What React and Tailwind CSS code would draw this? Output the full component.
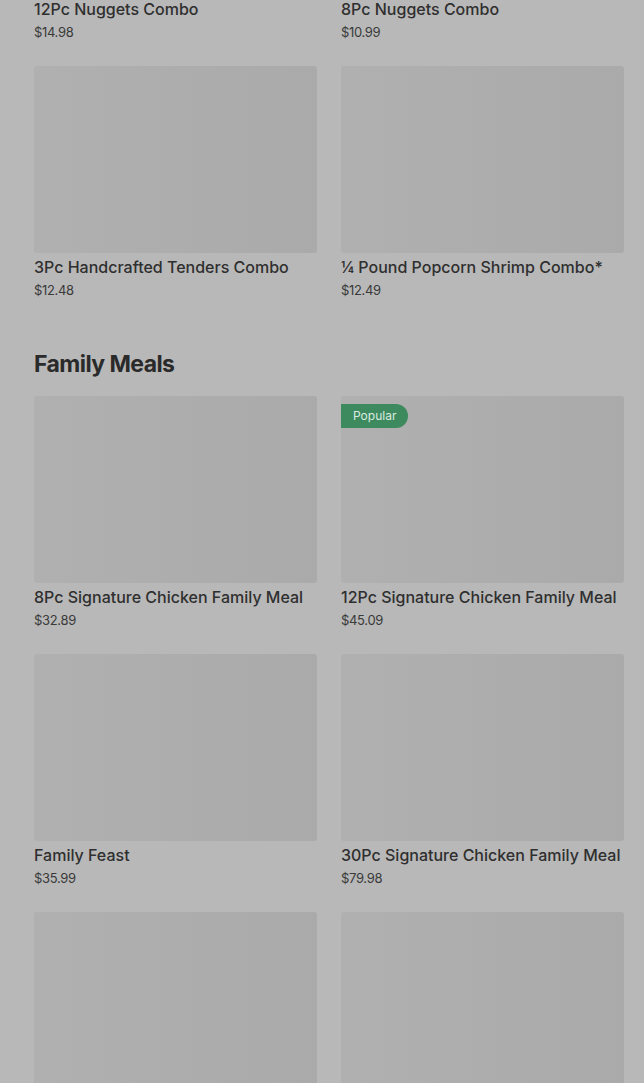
const combos = [
  { name: "12Pc Nuggets Combo", price: "$14.98" },
  { name: "8Pc Nuggets Combo", price: "$10.99" },
  { name: "3Pc Handcrafted Tenders Combo", price: "$12.48" },
  { name: "¼ Pound Popcorn Shrimp Combo*", price: "$12.49" },
];

const familyMeals = [
  { name: "8Pc Signature Chicken Family Meal", price: "$32.89" },
  { name: "12Pc Signature Chicken Family Meal", price: "$45.09", popular: true },
  { name: "Family Feast", price: "$35.99" },
  { name: "30Pc Signature Chicken Family Meal", price: "$79.98" },
  { name: "", price: "" },
  { name: "", price: "" },
];

function ItemCard({ item }) {
  return (
    <div className="flex flex-col">
      <div className="relative h-[187px] rounded-[3px] bg-gradient-to-r from-[#b0b0b0] via-[#adadad] to-[#aaaaaa]">
        {item.popular && (
          <span className="absolute left-0 top-2 h-6 pl-3 pr-3 flex items-center rounded-r-full bg-[#3c8a5e] text-[12px] text-[#dcebe1]">
            Popular
          </span>
        )}
      </div>
      {item.name && (
        <>
          <div className="mt-[2px] text-[16px] leading-6 font-medium text-[#2f2f2f] whitespace-nowrap">{item.name}</div>
          <div className="mt-[1px] text-[13px] leading-5 text-[#3a3a3a] tracking-tight">{item.price}</div>
        </>
      )}
    </div>
  );
}

export default function App() {
  return (
    <div
      className="w-[644px] h-[1083px] overflow-hidden bg-[#b8b8b8]"
      style={{ fontFamily: "Inter, 'Noto Sans', sans-serif" }}
    >
      <div className="-mt-[192px] pl-[34px] pr-5">
        {/* Combos tail */}
        <div className="grid grid-cols-2 gap-x-6 gap-y-6">
          {combos.map((item, i) => (
            <ItemCard key={i} item={item} />
          ))}
        </div>

        {/* Family Meals */}
        <h2 className="mt-[48px] mb-4 text-[23px] leading-8 font-bold tracking-tight text-[#2a2a2a]">
          Family Meals
        </h2>
        <div className="grid grid-cols-2 gap-x-6 gap-y-6">
          {familyMeals.map((item, i) => (
            <ItemCard key={i} item={item} />
          ))}
        </div>
      </div>
    </div>
  );
}
